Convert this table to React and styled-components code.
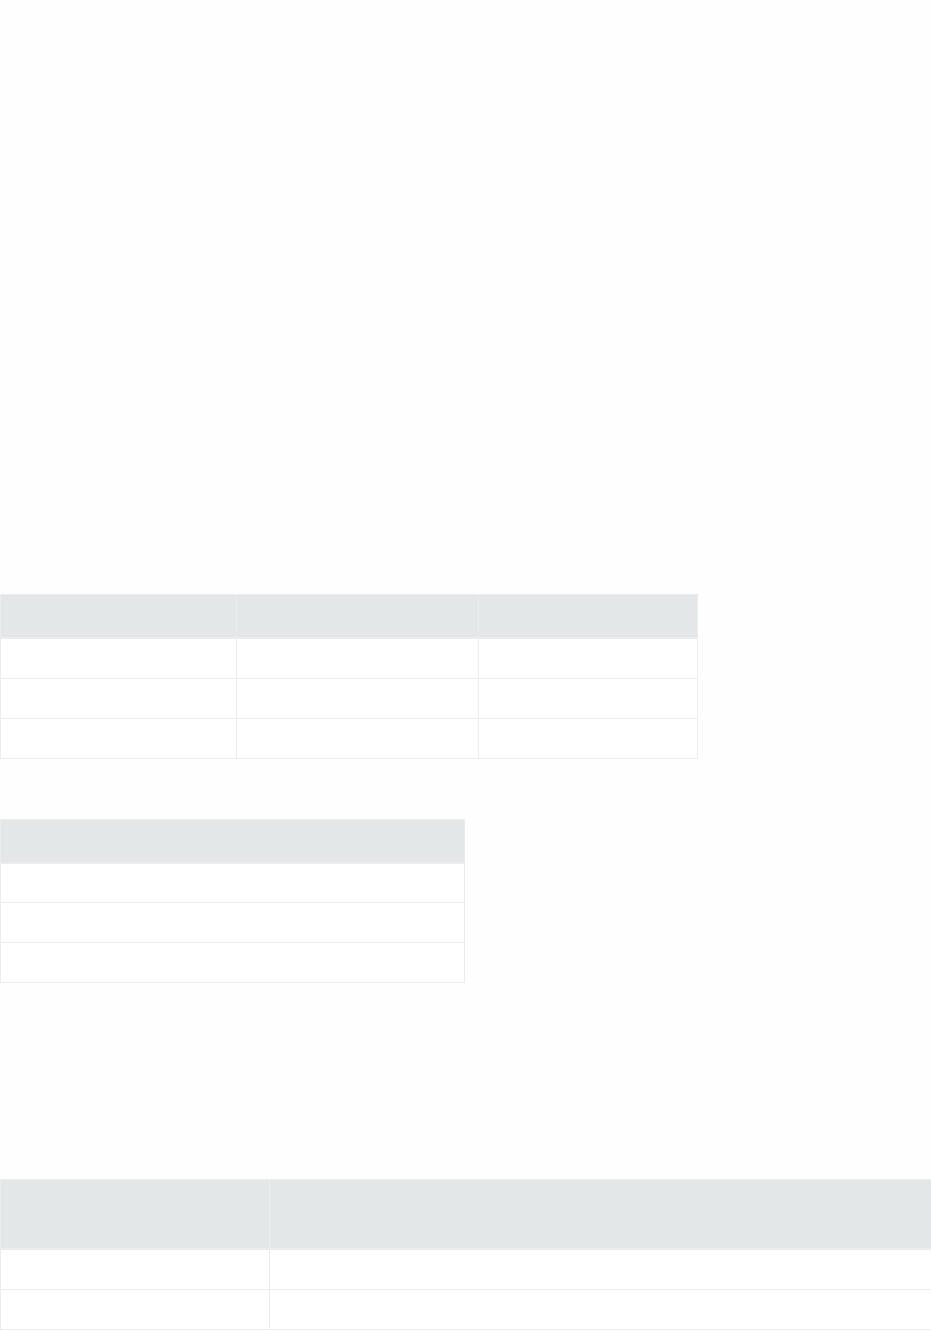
import React from 'react';
import styled, { createGlobalStyle } from 'styled-components';

const GlobalStyle = createGlobalStyle`
  html, body {
    margin: 0;
    padding: 0;
    background: #fefefe;
  }
  body {
    font-family: 'Open Sans', 'Liberation Sans', sans-serif;
    font-size: 14px;
    color: #333;
  }
`;

const tables = [
  { width: 697, cols: [236, 242, 219], rows: 3, headHeight: 45, gapTop: 594 },
  { width: 464, cols: [464], rows: 3, headHeight: 45, gapTop: 60 },
  { width: 931, cols: [269, 662], rows: 2, headHeight: 71, gapTop: 196 },
];

const Page = styled.main`
  display: flex;
  flex-direction: column;
  align-items: flex-start;
`;

const Table = styled.table`
  border-collapse: collapse;
  table-layout: fixed;
  width: ${(props) => props.$width}px;
  margin-top: ${(props) => props.$gapTop}px;
`;

const HeadCell = styled.th`
  background: #e3e7e8;
  border: 1px solid #ececec;
  border-bottom-width: 2px;
  height: ${(props) => props.$height - 3}px;
  padding: 0 12px;
  font-weight: 600;
  text-align: left;
`;

const Cell = styled.td`
  background: #ffffff;
  border: 1px solid #ececec;
  height: 40px;
  padding: 0 12px;
  box-sizing: border-box;
`;

const DataTable = ({ width, cols, rows, headHeight, gapTop }) => (
  <Table $width={width} $gapTop={gapTop}>
    <colgroup>
      {cols.map((w, i) => (
        <col key={i} style={{ width: w }} />
      ))}
    </colgroup>
    <thead>
      <tr>
        {cols.map((_, i) => (
          <HeadCell key={i} $height={headHeight} />
        ))}
      </tr>
    </thead>
    <tbody>
      {Array.from({ length: rows }).map((_, r) => (
        <tr key={r}>
          {cols.map((_, c) => (
            <Cell key={c} />
          ))}
        </tr>
      ))}
    </tbody>
  </Table>
);

const App = () => (
  <>
    <GlobalStyle />
    <Page>
      {tables.map((t, i) => (
        <DataTable key={i} {...t} />
      ))}
    </Page>
  </>
);

export default App;
